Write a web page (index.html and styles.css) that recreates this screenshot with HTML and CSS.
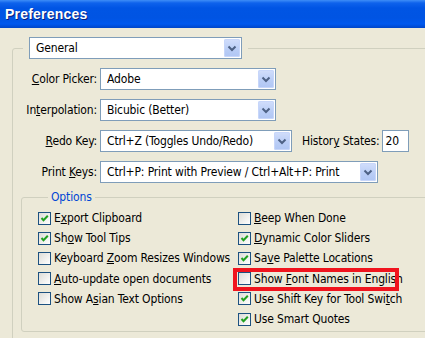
FILE: index.html
```html
<!DOCTYPE html>
<html>
<head>
<meta charset="utf-8">
<link rel="stylesheet" href="styles.css">
</head>
<body>
<div class="titlebar"><span class="title">Preferences</span></div>
<div class="dialog">
  <fieldset class="outer">
    <legend class="outer-legend">
      <div class="select w-general"><span class="val">General</span><span class="btn"><svg width="16" height="18" viewBox="0 0 16 18"><path d="M4.5 7.5 L8 11 L11.5 7.5" fill="none" stroke="#4D6185" stroke-width="2"/></svg></span></div>
    </legend>
    <div class="rows">
      <div class="row">
        <span class="lbl"><u>C</u>olor Picker:</span>
        <div class="select w-cp"><span class="val">Adobe</span><span class="btn"><svg width="16" height="18" viewBox="0 0 16 18"><path d="M4.5 7.5 L8 11 L11.5 7.5" fill="none" stroke="#4D6185" stroke-width="2"/></svg></span></div>
      </div>
      <div class="row">
        <span class="lbl">In<u>t</u>erpolation:</span>
        <div class="select w-cp"><span class="val">Bicubic (Better)</span><span class="btn"><svg width="16" height="18" viewBox="0 0 16 18"><path d="M4.5 7.5 L8 11 L11.5 7.5" fill="none" stroke="#4D6185" stroke-width="2"/></svg></span></div>
      </div>
      <div class="row">
        <span class="lbl"><u>R</u>edo Key:</span>
        <div class="select w-redo"><span class="val">Ctrl+Z (Toggles Undo/Redo)</span><span class="btn"><svg width="16" height="18" viewBox="0 0 16 18"><path d="M4.5 7.5 L8 11 L11.5 7.5" fill="none" stroke="#4D6185" stroke-width="2"/></svg></span></div>
        <span class="hist">Histor<u>y</u> States:</span>
        <div class="input">20</div>
      </div>
      <div class="row">
        <span class="lbl">Print <u>K</u>eys:</span>
        <div class="select w-print"><span class="val">Ctrl+P: Print with Preview / Ctrl+Alt+P: Print</span><span class="btn"><svg width="16" height="18" viewBox="0 0 16 18"><path d="M4.5 7.5 L8 11 L11.5 7.5" fill="none" stroke="#4D6185" stroke-width="2"/></svg></span></div>
      </div>
    </div>
    <fieldset class="options">
      <legend class="opt-legend">Options</legend>
      <div class="cols">
        <ul class="col">
          <li class="cb"><span class="box"><svg width="11" height="11" viewBox="0 0 11 11"><path d="M2.5 5 L4.5 7.2 L8.8 2.8" fill="none" stroke="#21A121" stroke-width="2"/></svg></span><span class="txt">E<u>x</u>port Clipboard</span></li>
          <li class="cb"><span class="box"><svg width="11" height="11" viewBox="0 0 11 11"><path d="M2.5 5 L4.5 7.2 L8.8 2.8" fill="none" stroke="#21A121" stroke-width="2"/></svg></span><span class="txt">Sh<u>o</u>w Tool Tips</span></li>
          <li class="cb"><span class="box"></span><span class="txt">Keyboard <u>Z</u>oom Resizes Windows</span></li>
          <li class="cb"><span class="box"></span><span class="txt"><u>A</u>uto-update open documents</span></li>
          <li class="cb"><span class="box"></span><span class="txt">Show A<u>s</u>ian Text Options</span></li>
        </ul>
        <ul class="col">
          <li class="cb"><span class="box"></span><span class="txt"><u>B</u>eep When Done</span></li>
          <li class="cb"><span class="box"><svg width="11" height="11" viewBox="0 0 11 11"><path d="M2.5 5 L4.5 7.2 L8.8 2.8" fill="none" stroke="#21A121" stroke-width="2"/></svg></span><span class="txt"><u>D</u>ynamic Color Sliders</span></li>
          <li class="cb"><span class="box"><svg width="11" height="11" viewBox="0 0 11 11"><path d="M2.5 5 L4.5 7.2 L8.8 2.8" fill="none" stroke="#21A121" stroke-width="2"/></svg></span><span class="txt">Sa<u>v</u>e Palette Locations</span></li>
          <li class="cb"><span class="box"></span><span class="txt">Show <u>F</u>ont Names in English</span><span class="mark"></span></li>
          <li class="cb"><span class="box"><svg width="11" height="11" viewBox="0 0 11 11"><path d="M2.5 5 L4.5 7.2 L8.8 2.8" fill="none" stroke="#21A121" stroke-width="2"/></svg></span><span class="txt">Use Shift Key for Tool Swi<u>t</u>ch</span></li>
          <li class="cb"><span class="box"><svg width="11" height="11" viewBox="0 0 11 11"><path d="M2.5 5 L4.5 7.2 L8.8 2.8" fill="none" stroke="#21A121" stroke-width="2"/></svg></span><span class="txt">Use Smart Quotes</span></li>
        </ul>
      </div>
    </fieldset>
  </fieldset>
</div>
</body>
</html>
```
FILE: styles.css
```css
html, body {
  margin: 0;
  padding: 0;
}
body {
  width: 425px;
  height: 338px;
  overflow: hidden;
  background: #ECE9D8;
  font-family: "DejaVu Sans Condensed", "DejaVu Sans", sans-serif;
  font-size: 12px;
  letter-spacing: -0.15px;
  color: #000;
}
.titlebar {
  height: 28px;
  box-sizing: border-box;
  background: linear-gradient(to bottom, #3E8EF7 0px, #0E62EC 3px, #0055E4 8px, #0054E3 18px, #0058EE 24px, #0046C8 28px);
  display: flex;
  align-items: center;
  padding-left: 5px;
}
.title {
  color: #fff;
  font-family: "Liberation Sans", Arial, sans-serif;
  font-weight: bold;
  font-size: 14px;
  text-shadow: 1px 1px 0 #0A1E7A;
  letter-spacing: 0.2px;
}
.dialog {
  width: 425px;
  height: 310px;
  overflow: hidden;
  padding: 9px 0 0 12px;
  box-sizing: border-box;
}
fieldset {
  margin: 0;
  min-width: 0;
}
.outer {
  width: 430px;
  height: 320px;
  box-sizing: border-box;
  border: 1px solid #D0D0BF;
  border-radius: 3px;
  padding: 0;
}
.outer-legend {
  margin-left: 10px;
  padding: 0 6px;
}
.select {
  box-sizing: border-box;
  height: 22px;
  background: #fff;
  border: 1px solid #7F9DB9;
  display: flex;
  align-items: center;
  padding-left: 6px;
}
.val {
  flex: 1;
  white-space: nowrap;
  overflow: hidden;
}
.btn {
  width: 16px;
  height: 18px;
  margin: 1px;
  border-radius: 2px;
  background: linear-gradient(to bottom, #D2DEFB, #B9CDF6 60%, #B0C6F4);
  box-shadow: inset 0 0 0 1px #C7D6FA;
  display: flex;
}
.w-general { width: 213px; }
.w-cp { width: 176px; }
.w-redo { width: 192px; }
.w-print { width: 278px; }
.rows {
  display: flex;
  flex-direction: column;
  gap: 9px;
  margin-top: 9px;
}
.row {
  display: flex;
  align-items: center;
}
.lbl {
  width: 84px;
  text-align: right;
  margin-right: 3px;
  white-space: nowrap;
}
.hist {
  margin-left: 10px;
  margin-right: 3px;
  white-space: nowrap;
}
.input {
  box-sizing: border-box;
  width: 27px;
  height: 22px;
  background: #fff;
  border: 1px solid #7F9DB9;
  padding: 3px 0 0 2px;
}
.options {
  margin: 7px 0 0 8px;
  width: 420px;
  height: 142px;
  box-sizing: border-box;
  border: 1px solid #D0D0BF;
  border-radius: 3px;
  padding: 4px 0 0 16px;
}
.opt-legend {
  margin-left: 10px;
  padding: 0 3px;
  color: #0046D5;
}
.cols {
  display: flex;
}
.col {
  list-style: none;
  margin: 0;
  padding: 0;
  width: 200px;
}
.cb {
  position: relative;
  height: 20.2px;
  display: flex;
  align-items: center;
  white-space: nowrap;
}
.box {
  box-sizing: border-box;
  width: 13px;
  height: 13px;
  border: 1px solid #1C5180;
  background: linear-gradient(135deg, #DCDCD7, #FFFFFF);
  margin-right: 3px;
  display: flex;
  flex: none;
}
.mark {
  position: absolute;
  left: -5px;
  top: -1px;
  width: 166px;
  height: 23px;
  box-sizing: border-box;
  border: 4px solid #F0141E;
}
```
